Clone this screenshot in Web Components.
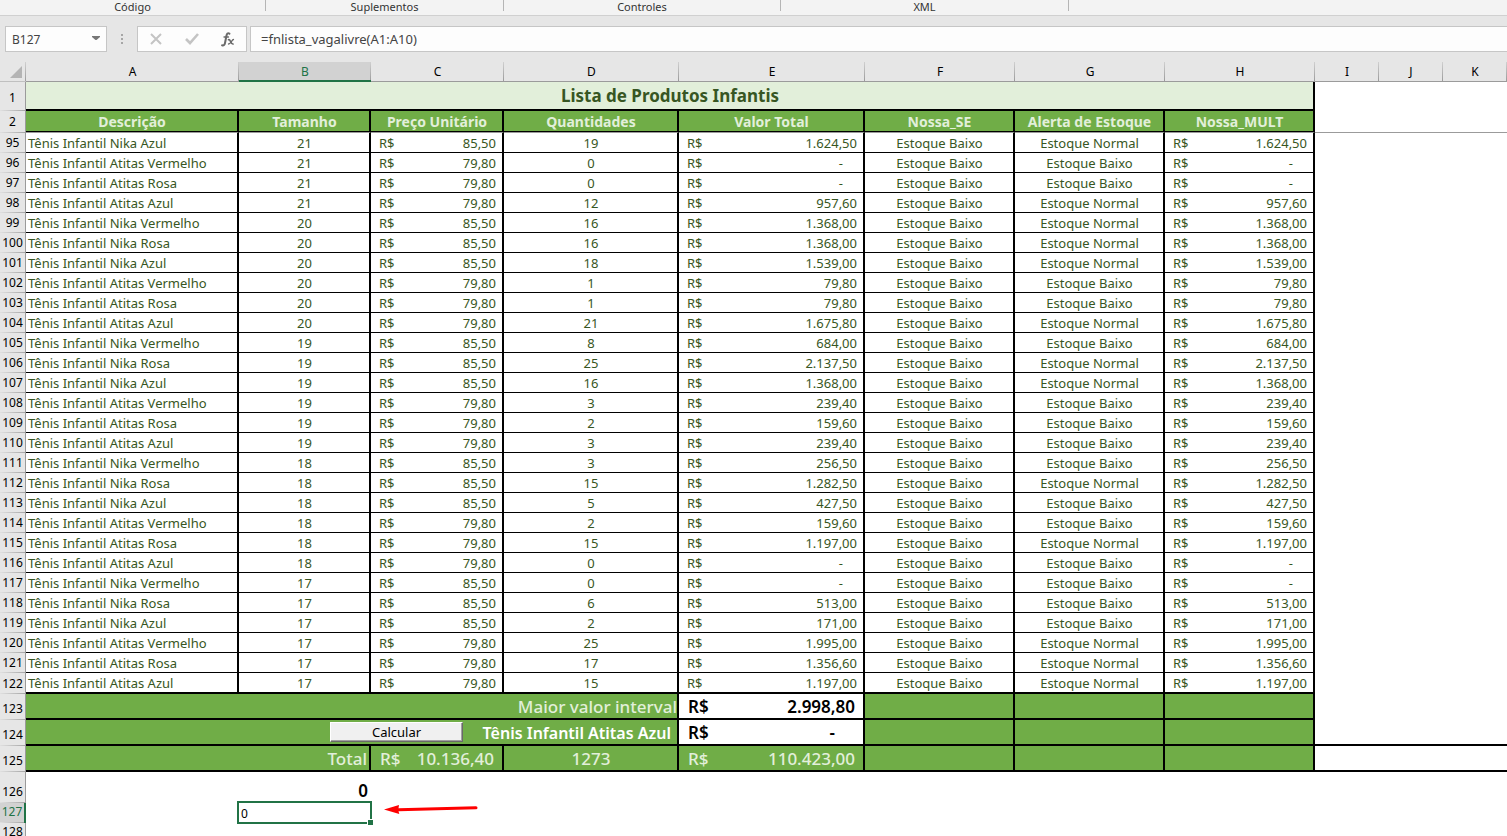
<!DOCTYPE html>
<html lang="pt-BR">
<head>
<meta charset="utf-8">
<title>Lista de Produtos Infantis</title>
<style>
  html, body { margin: 0; height: 100%; }
  body { font-family: "Noto Sans", "Open Sans", sans-serif; background: #fff; color: #000; overflow: hidden; }
</style>
</head>
<body>
<sheet-app></sheet-app>

<script>
class RibbonGroup extends HTMLElement {
  constructor() {
    super();
    this.attachShadow({ mode: "open" }).innerHTML = `
      <style>
        :host { display: flex; justify-content: center; box-sizing: border-box; height: 11px; border-right: 1px solid #b5b5b5; }
        span { font-size: 11px; line-height: 14px; color: #333; }
      </style>
      <span><slot></slot></span>`;
  }
}
customElements.define("ribbon-group", RibbonGroup);

class RibbonFooter extends HTMLElement {
  constructor() {
    super();
    this.attachShadow({ mode: "open" }).innerHTML = `
      <style>
        :host { display: grid; grid-template-columns: 266px 238px 277px 288px; height: 15px; background: #f3f3f3; border-bottom: 1px solid #d0d0d0; }
      </style>
      <ribbon-group>Código</ribbon-group>
      <ribbon-group>Suplementos</ribbon-group>
      <ribbon-group>Controles</ribbon-group>
      <ribbon-group>XML</ribbon-group>`;
  }
}
customElements.define("ribbon-footer", RibbonFooter);

class FormulaBar extends HTMLElement {
  constructor() {
    super();
    this.attachShadow({ mode: "open" }).innerHTML = `
      <style>
        :host { display: flex; align-items: stretch; height: 26px; padding: 10px 0 10px 5px; background: #e6e6e6; }
        * { box-sizing: border-box; }
        .box { display: flex; align-items: center; border: 1px solid #c6c6c6; background: #fdfdfd; }
        .name { width: 102px; }
        input { flex: 1; min-width: 0; height: 24px; border: 0; outline: 0; margin: 0; background: none; color: #444; font-family: inherit; }
        .name input { font-size: 12px; padding: 0 0 0 6px; }
        .name button { width: 20px; }
        button { border: 0; background: none; padding: 0; margin: 0; height: 24px; display: flex; align-items: center; justify-content: center; }
        .dots { width: 30px; display: flex; align-items: center; justify-content: center; }
        .tools { width: 110px; }
        .tools button { flex: 1; }
        .formula { flex: 1; margin-left: 3px; border-right: 0; }
        .formula input { font-size: 13px; padding: 0 0 0 10px; }
      </style>
      <div class="box name">
        <input aria-label="Caixa de nome" value="B127">
        <button aria-label="Abrir lista de nomes"><svg width="8" height="8" viewBox="0 0 8 8"><path d="M0 1h8v1L4.500 5h-1L0 2z" fill="#777"/></svg></button>
      </div>
      <div class="dots"><svg width="2" height="12" viewBox="0 0 2 12" fill="#a6a6a6"><path d="M0 1h2v2H0zM0 5h2v2H0zM0 9h2v2H0z"/></svg></div>
      <div class="box tools">
        <button aria-label="Cancelar"><svg width="12" height="12" viewBox="0 0 12 12" fill="none" stroke="#c4c4c4" stroke-width="2"><path d="M1 1l10 10M11 1L1 11"/></svg></button>
        <button aria-label="Inserir"><svg width="14" height="12" viewBox="0 0 14 12" fill="none" stroke="#c4c4c4" stroke-width="2.600"><path d="M1 6l4 4L13 1"/></svg></button>
        <button aria-label="Inserir função"><svg width="14" height="15" viewBox="0 0 14 15" fill="none" stroke="#6a6a6a" stroke-linecap="round"><path d="M8.400 1.600C6.800.6 5.800 1.800 5.400 4L4 11c-.3 1.900-1.300 2.800-2.900 2.300" stroke-width="2"/><path d="M3 5h4.500" stroke-width="1.300"/><path d="M7.500 7.700c2-1 2 4.600 4.500 4.300" stroke-width="1.700"/><path d="M12.500 7.500c-1.500 0-3 4.500-5 4.500" stroke-width="1.300"/></svg></button>
      </div>
      <div class="box formula"><input aria-label="Barra de fórmulas" value="=fnlista_vagalivre(A1:A10)"></div>`;
  }
}
customElements.define("formula-bar", FormulaBar);

class SheetButton extends HTMLElement {
  constructor() {
    super();
    this.attachShadow({ mode: "open" }).innerHTML = `
      <style>
        :host { display: block; width: 133px; height: 20px; }
        button { display: block; box-sizing: border-box; width: 100%; height: 100%; margin: 0; padding: 0; border: 1px solid; border-color: #fff #696969 #696969 #fff; box-shadow: inset -1px -1px #a0a0a0; background: #f0f0f0; color: #000; font: 13px/18px "Noto Sans", sans-serif; }
      </style>
      <button><slot></slot></button>`;
  }
}
customElements.define("sheet-button", SheetButton);

class RedArrow extends HTMLElement {
  constructor() {
    super();
    this.attachShadow({ mode: "open" }).innerHTML = `
      <style>:host { display: block; width: 94px; height: 12px; } svg { display: block; }</style>
      <svg width="94" height="12" viewBox="0 0 94 12"><path d="M0 6.600L15 2 14.500 5.200 92 3.300a1.400 1.400 0 0 1 0 3L14.500 8.200 15.300 11z" fill="#f00"/></svg>`;
  }
}
customElements.define("red-arrow", RedArrow);

/* row, product, size, unit price, quantity, total, stock alert (N = normal, B = baixo) */
const ROWS = `95|Nika Azul|21|85,50|19|1.624,50|N
96|Atitas Vermelho|21|79,80|0|-|B
97|Atitas Rosa|21|79,80|0|-|B
98|Atitas Azul|21|79,80|12|957,60|N
99|Nika Vermelho|20|85,50|16|1.368,00|N
100|Nika Rosa|20|85,50|16|1.368,00|N
101|Nika Azul|20|85,50|18|1.539,00|N
102|Atitas Vermelho|20|79,80|1|79,80|B
103|Atitas Rosa|20|79,80|1|79,80|B
104|Atitas Azul|20|79,80|21|1.675,80|N
105|Nika Vermelho|19|85,50|8|684,00|B
106|Nika Rosa|19|85,50|25|2.137,50|N
107|Nika Azul|19|85,50|16|1.368,00|N
108|Atitas Vermelho|19|79,80|3|239,40|B
109|Atitas Rosa|19|79,80|2|159,60|B
110|Atitas Azul|19|79,80|3|239,40|B
111|Nika Vermelho|18|85,50|3|256,50|B
112|Nika Rosa|18|85,50|15|1.282,50|N
113|Nika Azul|18|85,50|5|427,50|B
114|Atitas Vermelho|18|79,80|2|159,60|B
115|Atitas Rosa|18|79,80|15|1.197,00|N
116|Atitas Azul|18|79,80|0|-|B
117|Nika Vermelho|17|85,50|0|-|B
118|Nika Rosa|17|85,50|6|513,00|B
119|Nika Azul|17|85,50|2|171,00|B
120|Atitas Vermelho|17|79,80|25|1.995,00|N
121|Atitas Rosa|17|79,80|17|1.356,60|N
122|Atitas Azul|17|79,80|15|1.197,00|N`.split("\n").map(line => line.split("|"));

const money = v => `<div class="money"><span>R$</span><span${v === "-" ? ' class="nil"' : ""}>${v}</span></div>`;
const dataRow = ([n, product, size, price, qty, total, alert]) => `
  <tr class="data"><th scope="row">${n}</th><td class="left">Tênis Infantil ${product}</td><td>${size}</td><td>${money(price)}</td><td>${qty}</td><td>${money(total)}</td><td>Estoque Baixo</td><td>Estoque ${alert === "N" ? "Normal" : "Baixo"}</td><td>${money(total)}</td><td class="free" colspan="4"></td></tr>`;

class SheetGrid extends HTMLElement {
  constructor() {
    super();
    this.attachShadow({ mode: "open" }).innerHTML = `
      <style>
        :host { display: block; overflow: hidden; background: #fff; }
        table { width: 100%; table-layout: fixed; border-collapse: separate; border-spacing: 0; }
        td, th { box-sizing: border-box; padding: 0; font-weight: 400; white-space: nowrap; overflow: hidden; }
        thead th { height: 20px; font-size: 12px; line-height: 19px; vertical-align: top; background: linear-gradient(#d0d0d0, #9b9b9b) right / 1px 100% no-repeat #e6e6e6; border-bottom: 1px solid #9b9b9b; }
        thead th.on { background-color: #d2d2d2; color: #217346; box-shadow: inset 0 -1px #217346; border-bottom-color: #217346; }
        thead th.corner { border-bottom-color: #c0c0c0; }
        .corner svg { display: block; margin: 4px 0 0 10px; }
        tbody th { font-size: 12px; line-height: 18px; vertical-align: bottom; background: linear-gradient(90deg, #e0e0e0, #a6a6a6) bottom / 100% 1px no-repeat #e6e6e6; border-right: 1px solid #9b9b9b; padding-bottom: 2px; }
        tbody th.on { background-color: #d2d2d2; color: #217346; border-right: 2px solid #217346; }
        .data th { line-height: 20px; padding-bottom: 0; }
        .caption th { padding-bottom: 4px; }
        td { text-align: center; border-right: 2px solid #000; border-bottom: 2px solid #000; padding-left: 1px; }
        .free { border-color: transparent; border-right: 0; }
        .title { height: 29px; font-size: 17px; line-height: 27px; font-weight: 700; background: #e2efda; color: #375623; }
        .heads td { height: 22px; font-size: 14px; line-height: 20px; font-weight: 700; background: #70ad47; color: #e2efda; border-bottom: 1px solid #9b9b9b; box-shadow: inset 0 -1px #000; }
        .heads .free { background: none; box-shadow: none; }
        .data td { height: 20px; font-size: 13px; line-height: 17px; padding-top: 2px; color: #375623; border-bottom-width: 1px; }
        .data:nth-child(30) td { height: 21px; border-bottom-width: 2px; }
        .data .left { text-align: left; padding-left: 2px; }
        .money { display: flex; justify-content: space-between; padding: 0 6px 0 7px; }
        .nil { padding-right: 14px; }
        .sum td { height: 26px; font-size: 17px; line-height: 22px; padding-top: 2px; background: #70ad47; color: #e2efda; font-weight: 500; }
        .sum .money { padding: 0 8px; }
        .sum .nil { padding-right: 20px; }
        .sum td.free { background: none; }
        .sum td.ruled { border-bottom-color: #000; }
        .sum td.right { text-align: right; padding-right: 2px; }
        .sum td.clip { padding-right: 0; }
        .sum td.pick { color: #fff; font-weight: 600; font-size: 16px; padding-right: 6px; position: relative; }
        .sum td.result { background: #fff; color: #000; font-weight: 600; }
        sheet-button { position: absolute; left: 304px; top: 2px; }
        .plain td { border: 0; height: 20px; text-align: left; font-size: 12px; line-height: 18px; padding-top: 2px; }
        .plain .carry { height: 31px; text-align: right; font-size: 17px; font-weight: 600; line-height: 24px; padding: 6px 3px 0 0; }
        .plain .active { position: relative; overflow: visible; padding-left: 2px; }
        .active::before { content: ""; position: absolute; inset: -2px -1px -1px -2px; border: 2px solid #217346; }
        .active::after { content: ""; position: absolute; right: -2px; bottom: -2px; width: 5px; height: 5px; background: #217346; border: 1px solid #fff; border-width: 1px 0 0 1px; }
        .plain .note { position: relative; overflow: visible; }
        red-arrow { position: absolute; left: 13px; top: 0; }
      </style>
      <table>
        <colgroup>
          <col style="width:26px"><col style="width:213px"><col style="width:132px"><col style="width:133px"><col style="width:175px"><col style="width:186px">
          <col style="width:150px"><col style="width:150px"><col style="width:150px"><col style="width:64px"><col style="width:64px"><col style="width:64px"><col>
        </colgroup>
        <thead>
          <tr><th class="corner"><svg width="12" height="12" viewBox="0 0 12 12"><path d="M12 0v12H0z" fill="#b4b4b4"/></svg></th>
          ${[..."ABCDEFGHIJK"].map(c => `<th scope="col"${c === "B" ? ' class="on"' : ""}>${c}</th>`).join("")}<th></th></tr>
        </thead>
        <tbody>
          <tr class="caption"><th scope="row">1</th><td class="title" colspan="8">Lista de Produtos Infantis</td><td class="free" colspan="4"></td></tr>
          <tr class="heads"><th scope="row">2</th>${["Descrição", "Tamanho", "Preço Unitário", "Quantidades", "Valor Total", "Nossa_SE", "Alerta de Estoque", "Nossa_MULT"].map(h => `<td>${h}</td>`).join("")}<td class="free" colspan="4"></td></tr>
          ${ROWS.map(dataRow).join("")}
          <tr class="sum"><th scope="row">123</th><td class="right clip" colspan="4">Maior valor interval</td><td class="result">${money("2.998,80")}</td><td></td><td></td><td></td><td class="free" colspan="4"></td></tr>
          <tr class="sum"><th scope="row">124</th><td class="right pick" colspan="4"><sheet-button>Calcular</sheet-button>Tênis Infantil Atitas Azul</td><td class="result">${money("-")}</td><td></td><td></td><td></td><td class="free ruled" colspan="4"></td></tr>
          <tr class="sum"><th scope="row">125</th><td class="right" colspan="2">Total</td><td>${money("10.136,40")}</td><td>1273</td><td>${money("110.423,00")}</td><td></td><td></td><td></td><td class="free ruled" colspan="4"></td></tr>
          <tr class="plain"><th scope="row">126</th><td></td><td class="carry">0</td><td colspan="10"></td></tr>
          <tr class="plain"><th scope="row" class="on">127</th><td></td><td class="active">0</td><td class="note" colspan="10"><red-arrow></red-arrow></td></tr>
          <tr class="plain"><th scope="row">128</th><td colspan="12"></td></tr>
        </tbody>
      </table>`;
  }
}
customElements.define("sheet-grid", SheetGrid);

class SheetApp extends HTMLElement {
  constructor() {
    super();
    this.attachShadow({ mode: "open" }).innerHTML = `
      <style>
        :host { display: flex; flex-direction: column; height: 100vh; }
        sheet-grid { flex: 1; min-height: 0; }
      </style>
      <ribbon-footer></ribbon-footer>
      <formula-bar></formula-bar>
      <sheet-grid></sheet-grid>`;
  }
}
customElements.define("sheet-app", SheetApp);
</script>
</body>
</html>
